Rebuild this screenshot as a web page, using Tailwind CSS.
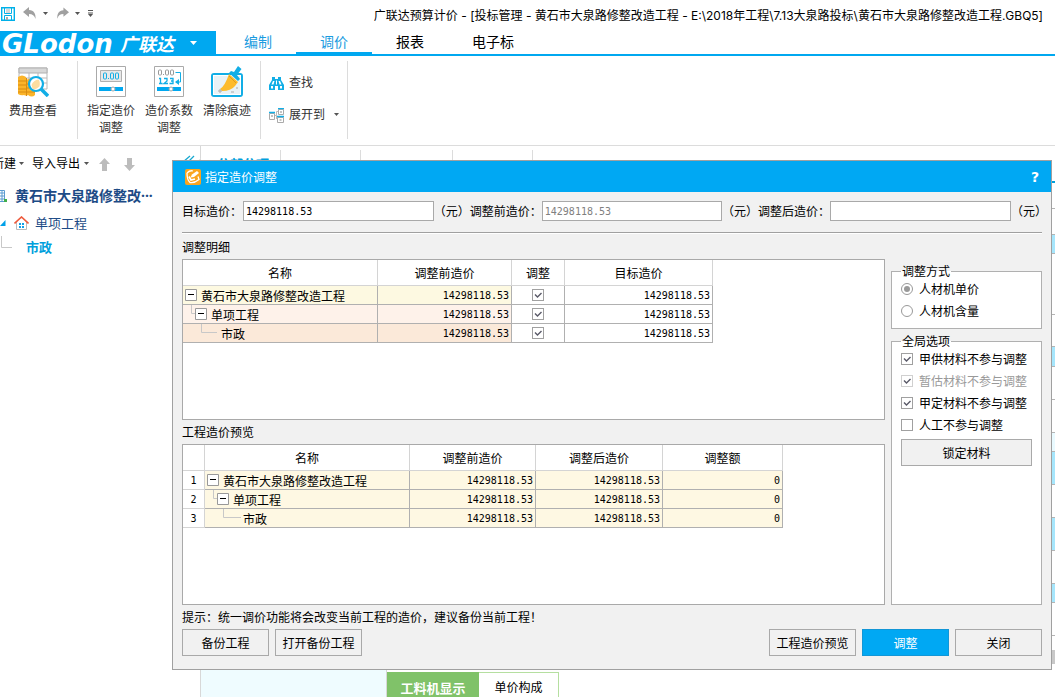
<!DOCTYPE html>
<html lang="zh-CN">
<head>
<meta charset="utf-8">
<title>广联达预算计价</title>
<script src="https://cdn.jsdelivr.net/npm/@tailwindcss/browser@4"></script>
</head>
<body class="relative flex h-screen flex-col overflow-hidden bg-white font-['Noto_Sans','Noto_Sans_CJK_SC',sans-serif] text-xs leading-4 text-black">

<!-- Title bar -->
<header class="flex h-[31px] shrink-0 items-center justify-between pr-3">
  <div class="flex items-center pb-1">
    <button aria-label="保存" class="ml-px"><svg class="block" width="14" height="14" viewBox="0 0 14 14" fill="none"><path d="M.7.7h12.6v12.6H.7z" stroke="#00b0e8" stroke-width="1.4"/><path d="M3.5 1v5.5h7V1M3.5 13V8.5h7V13" stroke="#00b0e8"/><path d="M5 3h4M5 5h4" stroke="#b0b0b0"/><path d="M5 10h2v3H5z" fill="#aaa"/></svg></button>
    <button aria-label="撤销" class="ml-2 flex items-center gap-1.5"><svg width="14" height="14" viewBox="0 0 14 14"><path d="M0 5 6 0v3c5 0 7 4 6.500 9C11.500 8.500 9.500 7 6 7v3z" fill="#a0a0a0"/></svg><svg width="5" height="4"><path d="M0 0h5L2.500 3z" fill="#555"/></svg></button>
    <button aria-label="恢复" class="ml-2 flex items-center gap-1.5"><svg width="13" height="14" viewBox="0 0 14 14"><path d="M14 5 8 0v3C3 3 1 7 1.500 12 2.500 8.500 4.500 7 8 7v3z" fill="#a0a0a0"/></svg><svg width="5" height="4"><path d="M0 0h5L2.500 3z" fill="#555"/></svg></button>
    <button aria-label="自定义工具栏" class="ml-2"><svg class="block" width="6" height="8"><path d="M0 .5h5M0 3h5" stroke="#555"/><path d="M0 4h5L2.500 7z" fill="#555"/></svg></button>
  </div>
  <h1 class="font-['Inter','Noto_Sans_CJK_SC',sans-serif] whitespace-nowrap">广联达预算计价 - [投标管理 - 黄石市大泉路修整改造工程 - E:\2018年工程\7.13大泉路投标\黄石市大泉路修整改造工程.GBQ5]</h1>
</header>

<!-- Main tabs -->
<nav class="flex h-[25px] shrink-0 text-sm leading-[22px]">
  <button class="flex w-[216px] items-center bg-[#00a8f0] pl-0.5 text-left text-white">
    <span class="w-[118px] font-['DejaVu_Sans'] text-[26px] leading-6 font-bold italic">GLodon</span>
    <span class="text-lg leading-6 font-bold italic">广联达</span>
    <svg class="ml-4" width="8" height="5"><path d="M0 0h7L3.500 4z" fill="#fff"/></svg>
  </button>
  <div class="flex grow border-b-2 border-[#00a8f0] pl-1">
    <a href="#" class="px-6 text-[#1a9be0]">编制</a>
    <a href="#" class="border-b-2 border-[#00a8f0] px-6 text-[#1a9be0]">调价</a>
    <a href="#" class="px-6">报表</a>
    <a href="#" class="px-6">电子标</a>
  </div>
</nav>

<!-- Ribbon -->
<section class="flex h-[90px] shrink-0 border-b border-[#dcdcdc] pt-[5px] pb-1.5 text-[#333]">
  <div class="w-[77px] pl-1">
    <button class="flex w-[58px] flex-col items-center pt-1.5 leading-[17px]">
      <svg width="32" height="30" viewBox="0 0 32 30" fill="none"><path d="M2 1h28v21H2z" fill="#fff" stroke="#b8b8b8"/><path d="M2 1h28v5H2z" fill="#d8d8d8" stroke="#b0b0b0"/><path d="M2 11h28M2 16h28M12 6v16M21 6v16" stroke="#b8b8b8"/><path d="M1 10q4-3 8 0v3q5-3 9 0v15q-3 3-7 0-2 1-4 0-3 1-6-1z" fill="#fbb429"/><path d="M1 14h8M1 18h8M1 22h8M1 25h8M10 17h8M10 21h8M10 25h8M9.500 11v18" stroke="#d98c10"/><circle cx="19" cy="17" r="7" fill="#fff" stroke="#12aee6" stroke-width="2.200"/><path d="M14.500 18q2-5 7-5.500 2 2 1 7-4 4-7 2z" fill="#fcdda0"/><path d="m24 22 7 7" stroke="#12aee6" stroke-width="3.500"/></svg>
      <span class="mt-[5px]">费用查看</span>
    </button>
  </div>
  <div class="flex items-start border-l border-[#dcdcdc] px-1">
    <button class="flex w-[58px] flex-col items-center pt-[5px] leading-[17px]">
      <svg width="30" height="31" viewBox="0 0 30 31" fill="none"><path d="M.5.500h29v30H.5z" fill="#fff" stroke="#aaa"/><path d="M4.500 4.500h21v11h-21z" fill="#e8e8e8" stroke="#b0b0b0"/><rect x="7.500" y="7" width="3" height="6" rx="1" stroke="#12aee6"/><path d="M12 12.500h1" stroke="#12aee6"/><rect x="14.500" y="7" width="3" height="6" rx="1" stroke="#12aee6"/><rect x="19.500" y="7" width="3" height="6" rx="1" stroke="#12aee6"/><path d="M3 21h24v4H3z" fill="#00a8f0"/><circle cx="17" cy="23" r="2" fill="#fff" stroke="#aaa"/></svg>
      <span class="mt-[5px] w-12 text-center">指定造价调整</span>
    </button>
    <button class="flex w-[58px] flex-col items-center pt-[5px] leading-[17px]">
      <svg width="30" height="31" viewBox="0 0 30 31" fill="none"><path d="M.5.500h29v30H.5z" fill="#fff" stroke="#aaa"/><rect x="4.500" y="4" width="3" height="5" rx="1" stroke="#999"/><path d="M9 8.500h1" stroke="#999"/><rect x="11.500" y="4" width="3" height="5" rx="1" stroke="#999"/><rect x="16.500" y="4" width="3" height="5" rx="1" stroke="#999"/><path d="M5 12.500h1.500V18M5 17.500h3.500M10 12.500h3v2.500l-3 2.500h4M16 12.500h3V15h-2 2v2.500h-3.500" stroke="#12aee6" stroke-width="1.300"/><path d="M21.500 6.500h5V16H22" stroke="#12aee6"/><path d="m21 16 4-3v6z" fill="#12aee6"/><path d="M3 21h24v4H3z" fill="#00a8f0"/><circle cx="17" cy="23" r="2" fill="#fff" stroke="#aaa"/></svg>
      <span class="mt-[5px] w-12 text-center">造价系数调整</span>
    </button>
    <button class="flex w-[58px] flex-col items-center pt-[5px] leading-[17px]">
      <svg width="32" height="31" viewBox="0 0 32 31" fill="none"><rect x="1" y="8" width="30" height="22" rx="2" fill="#e9f2f6" stroke="#12aee6" stroke-width="2"/><rect x="2.500" y="9.500" width="27" height="19" stroke="#fff"/><path d="m18 8 9 8-3 4q-4 5-13 5l-2-2q5-3 9-15z" fill="#fdbb2c"/><path d="m18 7 9 8 2-2-3-4 4.500-6L27 0l-4 6-3-1z" fill="#12aee6"/><path d="m18 10 7 7" stroke="#e09c20"/><path d="M7 25h4M9 23v4M20 26h3M25 22h2" stroke="#aaa"/></svg>
      <span class="mt-[5px]">清除痕迹</span>
    </button>
  </div>
  <div class="flex w-[88px] flex-col border-x border-[#dcdcdc] pt-1.5 pl-2">
    <button class="flex h-8 items-center gap-[5px]">
      <svg width="15" height="15" viewBox="0 0 15 15"><path d="M3 1h3v2h3V1h3v3l3 5v5H9v-4H6v4H0V9l3-5z" fill="#12aee6"/><path d="M2 10h2v2.500H2zM11 10h2v2.500h-2zM4 5h1.500L4.500 8.500h-2zM9.500 5H11l1.500 3.500h-2zM7 4.500h1v4H7z" fill="#fff"/></svg>查找
    </button>
    <button class="flex h-8 items-center gap-[5px]">
      <svg width="15" height="15" viewBox="0 0 15 15" fill="none"><path d="M.5 5.500h5v6h-5zM9.500 1.500h5v5h-5zM8.500 9.500h6v5h-6z" stroke="#aaa"/><path d="M0 4.500h6M9 .500h6M8 8.500h7" stroke="#12aee6" stroke-width="1.400"/><path d="M6 7.500h1.500v-4H9M7.500 7.500V11" stroke="#bbb"/><path d="M2 8h2M11 4h2M10.500 12h2" stroke="#888"/></svg>展开到
      <svg class="ml-1" width="6" height="4"><path d="M0 0h5L2.500 3z" fill="#555"/></svg>
    </button>
  </div>
</section>

<!-- Workspace -->
<div class="flex min-h-0 grow">
  <aside class="w-[200px] shrink-0 overflow-hidden">
    <div class="flex h-9 items-center">
      <button class="-ml-2 flex items-center gap-[3px]">新建<svg width="5" height="4"><path d="M0 0h5L2.500 3z" fill="#555"/></svg></button>
      <button class="ml-2 flex items-center gap-1">导入导出<svg width="5" height="4"><path d="M0 0h5L2.500 3z" fill="#555"/></svg></button>
      <button aria-label="上移" class="ml-2.5"><svg class="block" width="11" height="13"><path d="M5.500 0 11 6H8v7H3V6H0z" fill="#bcbcbc"/></svg></button>
      <button aria-label="下移" class="ml-3.5"><svg class="block" width="11" height="13"><path d="M5.500 13 11 7H8V0H3v7H0z" fill="#bcbcbc"/></svg></button>
    </div>
    <ul class="text-[#1d4b86]">
      <li class="flex h-7 items-center gap-2 text-sm font-bold">
        <svg width="7" height="14" fill="none"><path d="M0 1.500h4.500v11H0" stroke="#5b9bd0"/><path d="M0 4h4M0 7h4M0 10h4M2 2v10" stroke="#5b9bd0"/><path d="M4 10h3v3H4z" fill="#3fae49"/></svg>黄石市大泉路修整改···
      </li>
      <li class="flex h-[26px] items-center text-[13px]">
        <svg width="6" height="7"><path d="M5.500 0v6H0z" fill="#00a0e8"/></svg>
        <svg class="mr-1.5 ml-2" width="15" height="14" viewBox="0 0 15 14" fill="none"><path d="M2.500 6v7.500h10V6" fill="#fff" stroke="#bbb"/><path d="M.5 7.500l7-6.500 7 6.500" stroke="#ee5a3c" stroke-width="1.600"/><path d="M5 7h2v2H5zM8 7h2v2H8zM5 10h2v2H5zM8 10h2v2H8z" fill="#12a0e8"/></svg>单项工程
      </li>
      <li class="flex h-[22px] items-center gap-3.5 text-[13px] font-bold text-[#00a0dc]">
        <svg width="12" height="22" fill="none"><path d="M1.500 0v11.500H12" stroke="#c8c8c8"/></svg>市政
      </li>
    </ul>
  </aside>
  <main class="flex min-w-0 grow flex-col border-l border-[#d8d8d8]">
    <div class="flex h-[37px] shrink-0 items-start border-b-2 border-[#00a0dc] pt-1 text-[13px] font-bold text-[#00a0dc]">
      <svg class="mt-1 -ml-5 shrink-0" width="20" height="12" fill="none"><path d="m2 8 7-6M6 9l7-7" stroke="#18a8d0" stroke-width="1.300"/><path d="m16 9 4-5" stroke="#ddd"/></svg>
      <a href="#" class="h-6 w-20 border-r border-[#dcdcdc] pt-1.5 pl-4">分部分项</a>
      <span class="h-6 w-20 border-r border-[#dcdcdc]"></span>
      <span class="h-6 w-[92px] border-r border-[#dcdcdc]"></span>
      <span class="h-6 w-20 border-r border-[#dcdcdc]"></span>
    </div>
    <!-- Quantity grid rows -->
    <div class="shrink-0 *:border-b *:border-[#b4b4b4]">
      <div class="h-[26px]"></div>
      <div class="h-[26px]"></div>
      <div class="h-[19px] bg-[#a6e6fc]"></div>
      <div class="h-[61px]"></div>
      <div class="h-8"></div>
      <div class="h-5 bg-[#a6e6fc]"></div>
      <div class="h-[33px]"></div>
      <div class="h-[33px]"></div>
      <div class="h-[19px] bg-[#e9faff]"></div>
      <div class="h-[33px] bg-[#a6e6fc]"></div>
      <div class="h-[33px]"></div>
      <div class="h-[33px] bg-[#a6e6fc]"></div>
      <div class="h-[33px]"></div>
      <div class="h-[19px] bg-[#a6e6fc]"></div>
      <div class="h-[33px]"></div>
    </div>
    <div class="mt-3.5 flex h-3.5 shrink-0 justify-end"><span class="w-3 bg-[#c8c8c8]"></span></div>
    <div class="flex grow">
      <div class="w-[186px] border-r border-[#d8d8d8] bg-[#effcff]"></div>
      <div class="flex items-stretch pt-2">
        <button class="w-[92px] bg-[#80c269] pt-1.5 text-[13px] font-bold text-white">工料机显示</button>
        <button class="w-20 border-t border-r border-[#b5dfa0] pt-1.5">单价构成</button>
      </div>
    </div>
  </main>
</div>

<!-- Dialog -->
<div role="dialog" aria-labelledby="dlg" class="absolute top-[160px] right-[3px] left-[172px] border border-[#a0a0a0] bg-[#f1f1f1] font-['Noto_Sans_CJK_SC',sans-serif]">
  <div class="flex h-[31px] items-center bg-[#00a8f3] px-3 text-white">
    <svg width="16" height="16" viewBox="0 0 16 16" fill="none"><rect width="16" height="16" rx="2" fill="#faa51e"/><path d="M2 4q3-3 6-2M2 4q0 7 3 9.500 4 1 9-3l-1-3" stroke="#fff" stroke-width="1.300"/><path d="m5.500 8.500 1.500-3 5-3.500 2 2-5 4z" fill="#fff"/><path d="m4 7.500 2 3.500 4-1" stroke="#fff" stroke-width="1.800"/></svg>
    <h2 id="dlg" class="ml-1 grow">指定造价调整</h2>
    <button aria-label="帮助" class="font-['DejaVu_Sans'] text-sm font-bold">?</button>
  </div>

  <div class="px-[9px] pt-[9px] pb-[13px]">
    <form class="-mr-[5px] flex h-5 items-center whitespace-nowrap">
      <label for="target" class="w-[61px]">目标造价：</label>
      <input id="target" value="14298118.53" class="h-5 w-0 grow-[191] border border-[#a9a9a9] bg-white px-0.5 font-['DejaVu_Sans_Mono'] text-[10px]">
      <span>（元）</span>
      <label for="before">调整前造价：</label>
      <input id="before" value="14298118.53" disabled class="h-5 w-0 grow-[180] border border-[#a9a9a9] bg-white px-0.5 font-['DejaVu_Sans_Mono'] text-[10px] text-[#808080]">
      <span>（元）</span>
      <label for="after">调整后造价：</label>
      <input id="after" disabled class="h-5 w-0 grow-[181] border border-[#a9a9a9] bg-white px-0.5 font-['DejaVu_Sans_Mono'] text-[10px]">
      <span>（元）</span>
    </form>
    <div class="mt-[11px] mb-1 h-0.5 border-t border-b border-t-[#a0a0a0] border-b-white"></div>

    <div class="flex gap-1.5">
      <div class="min-w-0 grow">
        <h3 class="h-[21px] pt-px">调整明细</h3>
        <div class="h-[161px] border border-[#a9a9a9] bg-white">
          <table class="table-fixed border-separate border-spacing-0 whitespace-nowrap [&_td]:h-[19px] [&_td]:border-r [&_td]:border-b [&_td]:border-[#b0b0b0] [&_td]:p-0 [&_th]:h-[26px] [&_th]:border-r [&_th]:border-b [&_th]:border-[#d4d4d4] [&_th]:p-0 [&_th]:font-normal">
            <thead><tr><th class="w-[195px]">名称</th><th class="w-[134px]">调整前造价</th><th class="w-[53px]">调整</th><th class="w-[148px]">目标造价</th></tr></thead>
            <tbody>
              <tr>
                <td class="bg-[#fdf9e1]"><div class="flex h-[18px] items-center gap-1 pl-0.5"><svg width="12" height="12"><path d="M.5.500h11v11H.5z" fill="#fff" stroke="#999"/><path d="M3 5.500h6" stroke="#000"/></svg><span class="pt-px">黄石市大泉路修整改造工程</span></div></td>
                <td class="bg-[#fdf9e1]"><div class="pt-px pr-0.5 text-right font-['DejaVu_Sans_Mono'] text-[10px]">14298118.53</div></td>
                <td><div class="grid h-[18px] place-content-center"><input type="checkbox" checked aria-label="调整 黄石市大泉路修整改造工程" class="col-start-1 row-start-1 size-3 appearance-none border border-[#a0a0a0] bg-white"><svg class="pointer-events-none col-start-1 row-start-1" width="12" height="12" fill="none"><path d="m3 5.500 2.500 2.500L9.500 4" stroke="#5a5a68" stroke-width="1.400"/></svg></div></td>
                <td><div class="pt-px pr-0.5 text-right font-['DejaVu_Sans_Mono'] text-[10px]">14298118.53</div></td>
              </tr>
              <tr>
                <td class="bg-[#fef2ea]"><div class="flex h-[18px] items-center pl-2"><svg width="16" height="18" fill="none"><path d="M.5 0v8.500H5" stroke="#c8c8c8"/><path d="M4.500 3.500h11v11h-11z" fill="#fff" stroke="#999"/><path d="M7 8.500h6" stroke="#000"/></svg><span class="ml-1 pt-px">单项工程</span></div></td>
                <td class="bg-[#fef2ea]"><div class="pt-px pr-0.5 text-right font-['DejaVu_Sans_Mono'] text-[10px]">14298118.53</div></td>
                <td><div class="grid h-[18px] place-content-center"><input type="checkbox" checked aria-label="调整 单项工程" class="col-start-1 row-start-1 size-3 appearance-none border border-[#a0a0a0] bg-white"><svg class="pointer-events-none col-start-1 row-start-1" width="12" height="12" fill="none"><path d="m3 5.500 2.500 2.500L9.500 4" stroke="#5a5a68" stroke-width="1.400"/></svg></div></td>
                <td><div class="pt-px pr-0.5 text-right font-['DejaVu_Sans_Mono'] text-[10px]">14298118.53</div></td>
              </tr>
              <tr>
                <td class="bg-[#fbe9d9]"><div class="flex h-[18px] items-center gap-0.5 pl-[18px]"><svg width="18" height="18" fill="none"><path d="M.5 0v8.500H16" stroke="#c8c8c8"/></svg><span class="pt-px">市政</span></div></td>
                <td class="bg-[#fbe9d9]"><div class="pt-px pr-0.5 text-right font-['DejaVu_Sans_Mono'] text-[10px]">14298118.53</div></td>
                <td><div class="grid h-[18px] place-content-center"><input type="checkbox" checked aria-label="调整 市政" class="col-start-1 row-start-1 size-3 appearance-none border border-[#a0a0a0] bg-white"><svg class="pointer-events-none col-start-1 row-start-1" width="12" height="12" fill="none"><path d="m3 5.500 2.500 2.500L9.500 4" stroke="#5a5a68" stroke-width="1.400"/></svg></div></td>
                <td><div class="pt-px pr-0.5 text-right font-['DejaVu_Sans_Mono'] text-[10px]">14298118.53</div></td>
              </tr>
            </tbody>
          </table>
        </div>
        <h3 class="h-6 leading-6">工程造价预览</h3>
        <div class="h-[161px] border border-[#a9a9a9] bg-white">
          <table class="table-fixed border-separate border-spacing-0 whitespace-nowrap [&_td]:h-[19px] [&_td]:border-r [&_td]:border-b [&_td]:border-[#b0b0b0] [&_td]:bg-[#fef8e3] [&_td]:p-0 [&_th]:h-[19px] [&_th]:border-r [&_th]:border-b [&_th]:border-[#d4d4d4] [&_th]:p-0 [&_th]:font-normal">
            <thead><tr class="h-[26px]"><th class="w-[22px]"></th><th class="w-[205px]">名称</th><th class="w-[126px]">调整前造价</th><th class="w-[127px]">调整后造价</th><th class="w-[120px]">调整额</th></tr></thead>
            <tbody>
              <tr>
                <th><div class="pt-px font-['DejaVu_Sans_Mono'] text-[10px]">1</div></th>
                <td><div class="flex h-[18px] items-center gap-1 pl-0.5"><svg width="12" height="12"><path d="M.5.500h11v11H.5z" fill="#fff" stroke="#999"/><path d="M3 5.500h6" stroke="#000"/></svg><span class="pt-px">黄石市大泉路修整改造工程</span></div></td>
                <td><div class="pt-px pr-0.5 text-right font-['DejaVu_Sans_Mono'] text-[10px]">14298118.53</div></td>
                <td><div class="pt-px pr-0.5 text-right font-['DejaVu_Sans_Mono'] text-[10px]">14298118.53</div></td>
                <td><div class="pt-px pr-0.5 text-right font-['DejaVu_Sans_Mono'] text-[10px]">0</div></td>
              </tr>
              <tr>
                <th><div class="pt-px font-['DejaVu_Sans_Mono'] text-[10px]">2</div></th>
                <td><div class="flex h-[18px] items-center pl-2"><svg width="16" height="18" fill="none"><path d="M.5 0v8.500H5" stroke="#c8c8c8"/><path d="M4.500 3.500h11v11h-11z" fill="#fff" stroke="#999"/><path d="M7 8.500h6" stroke="#000"/></svg><span class="ml-1 pt-px">单项工程</span></div></td>
                <td><div class="pt-px pr-0.5 text-right font-['DejaVu_Sans_Mono'] text-[10px]">14298118.53</div></td>
                <td><div class="pt-px pr-0.5 text-right font-['DejaVu_Sans_Mono'] text-[10px]">14298118.53</div></td>
                <td><div class="pt-px pr-0.5 text-right font-['DejaVu_Sans_Mono'] text-[10px]">0</div></td>
              </tr>
              <tr>
                <th><div class="pt-px font-['DejaVu_Sans_Mono'] text-[10px]">3</div></th>
                <td><div class="flex h-[18px] items-center gap-0.5 pl-[18px]"><svg width="18" height="18" fill="none"><path d="M.5 0v8.500H18" stroke="#c8c8c8"/></svg><span class="pt-px">市政</span></div></td>
                <td><div class="pt-px pr-0.5 text-right font-['DejaVu_Sans_Mono'] text-[10px]">14298118.53</div></td>
                <td><div class="pt-px pr-0.5 text-right font-['DejaVu_Sans_Mono'] text-[10px]">14298118.53</div></td>
                <td><div class="pt-px pr-0.5 text-right font-['DejaVu_Sans_Mono'] text-[10px]">0</div></td>
              </tr>
            </tbody>
          </table>
        </div>
      </div>

      <div class="flex w-[151px] shrink-0 flex-col gap-1 pt-[25px]">
        <fieldset class="border border-[#b0b0b0] bg-white px-[9px] pb-2">
          <legend class="h-4 px-px">调整方式</legend>
          <div class="flex flex-col gap-1 pt-px">
            <label class="flex h-[18px] items-center gap-1.5"><span class="grid"><input type="radio" name="mode" checked class="col-start-1 row-start-1 size-3 appearance-none rounded-full border border-[#999] bg-white"><span class="pointer-events-none col-start-1 row-start-1 size-1.5 place-self-center rounded-full bg-[#999]"></span></span>人材机单价</label>
            <label class="flex h-[18px] items-center gap-1.5"><input type="radio" name="mode" class="size-3 appearance-none rounded-full border border-[#999] bg-white">人材机含量</label>
          </div>
        </fieldset>
        <fieldset class="grow border border-[#b0b0b0] bg-white px-[9px]">
          <legend class="h-4 px-px">全局选项</legend>
          <div class="flex flex-col gap-1 pt-px">
            <label class="flex h-[18px] items-center gap-1.5"><span class="grid"><input type="checkbox" checked class="col-start-1 row-start-1 size-3 appearance-none border border-[#a0a0a0] bg-white"><svg class="pointer-events-none col-start-1 row-start-1" width="12" height="12" fill="none"><path d="m3 5.500 2.500 2.500L9.500 4" stroke="#5a5a68" stroke-width="1.400"/></svg></span>甲供材料不参与调整</label>
            <label class="flex h-[18px] items-center gap-1.5 text-[#999]"><span class="grid"><input type="checkbox" checked disabled class="col-start-1 row-start-1 size-3 appearance-none border border-[#d0d0d0] bg-white"><svg class="pointer-events-none col-start-1 row-start-1" width="12" height="12" fill="none"><path d="m3 5.500 2.500 2.500L9.500 4" stroke="#5a5a68" stroke-width="1.400"/></svg></span>暂估材料不参与调整</label>
            <label class="flex h-[18px] items-center gap-1.5"><span class="grid"><input type="checkbox" checked class="col-start-1 row-start-1 size-3 appearance-none border border-[#a0a0a0] bg-white"><svg class="pointer-events-none col-start-1 row-start-1" width="12" height="12" fill="none"><path d="m3 5.500 2.500 2.500L9.500 4" stroke="#5a5a68" stroke-width="1.400"/></svg></span>甲定材料不参与调整</label>
            <label class="flex h-[18px] items-center gap-1.5"><input type="checkbox" class="size-3 appearance-none border border-[#a0a0a0] bg-white">人工不参与调整</label>
            <button class="mt-px h-[27px] border border-[#a9a9a9] bg-[#f1f1f1]">锁定材料</button>
          </div>
        </fieldset>
      </div>
    </div>

    <p class="h-6 leading-6">提示：统一调价功能将会改变当前工程的造价，建议备份当前工程！</p>
    <div class="flex gap-1.5">
      <button class="h-[27px] w-[87px] border border-[#a9a9a9]">备份工程</button>
      <button class="mr-auto h-[27px] w-[87px] border border-[#a9a9a9]">打开备份工程</button>
      <button class="h-[27px] w-[87px] border border-[#a9a9a9]">工程造价预览</button>
      <button class="h-[27px] w-[87px] border border-[#1296d6] bg-[#00a8f3] text-white">调整</button>
      <button class="h-[27px] w-[87px] border border-[#a9a9a9]">关闭</button>
    </div>
  </div>
</div>
</body>
</html>
